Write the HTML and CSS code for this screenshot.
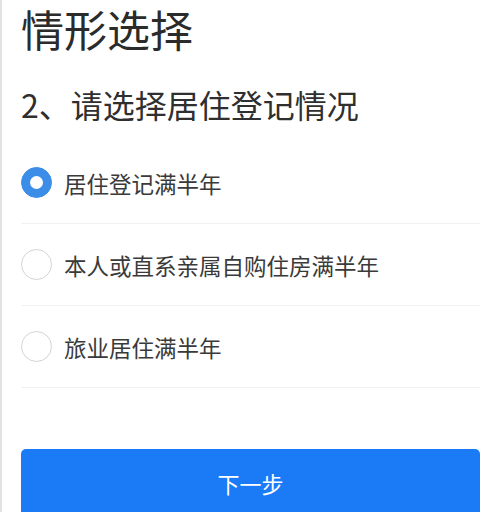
FILE: index.html
```html
<!DOCTYPE html>
<html lang="zh-CN">
<head>
<meta charset="utf-8">
<link rel="stylesheet" href="styles.css">
</head>
<body>
<div class="page">
  <h1 class="title">情形选择</h1>
  <h2 class="question">2、请选择居住登记情况</h2>
  <ul class="options">
    <li class="option">
      <span class="radio radio-on"><span class="dot"></span></span>
      <span class="label">居住登记满半年</span>
    </li>
    <li class="option">
      <span class="radio"></span>
      <span class="label">本人或直系亲属自购住房满半年</span>
    </li>
    <li class="option">
      <span class="radio"></span>
      <span class="label">旅业居住满半年</span>
    </li>
  </ul>
  <button class="next">下一步</button>
</div>
</body>
</html>
```

FILE: styles.css
```css
html, body {
  margin: 0;
  padding: 0;
  background: #ffffff;
}
body {
  font-family: "Noto Sans CJK SC", "Noto Sans", sans-serif;
  color: #333333;
}
.page {
  border-left: 2px solid #e2e2e2;
  padding: 0 18px 0 19px;
  min-height: 512px;
  box-sizing: border-box;
  overflow: hidden;
}
.title {
  margin: 0;
  font-size: 43px;
  font-weight: 400;
  line-height: 56px;
  color: #2b2b2b;
}
.question {
  margin: 28px 0 0;
  font-size: 32px;
  font-weight: 400;
  line-height: 40px;
  color: #2f2f2f;
}
.options {
  list-style: none;
  margin: 18px 0 0;
  padding: 0;
}
.option {
  display: flex;
  align-items: center;
  gap: 12px;
  height: 81px;
  border-bottom: 1px solid #f1f1f1;
}
.radio {
  width: 31px;
  height: 31px;
  border-radius: 50%;
  border: 1px solid #d4d4d4;
  box-sizing: border-box;
  display: flex;
  align-items: center;
  justify-content: center;
  flex: none;
  background: #fff;
}
.radio-on {
  background: #3b8de8;
  border-color: #3b8de8;
}
.dot {
  width: 13px;
  height: 13px;
  border-radius: 50%;
  background: #ffffff;
}
.label {
  font-size: 22.5px;
  color: #3a3a3a;
  line-height: 30px;
}
.next {
  display: block;
  width: 100%;
  margin-top: 61px;
  height: 68px;
  border: none;
  border-radius: 5px;
  background: #1b7bf7;
  color: #ffffff;
  font-family: "Noto Sans CJK SC", "Noto Sans", sans-serif;
  font-size: 22px;
  padding: 0;
}
```
